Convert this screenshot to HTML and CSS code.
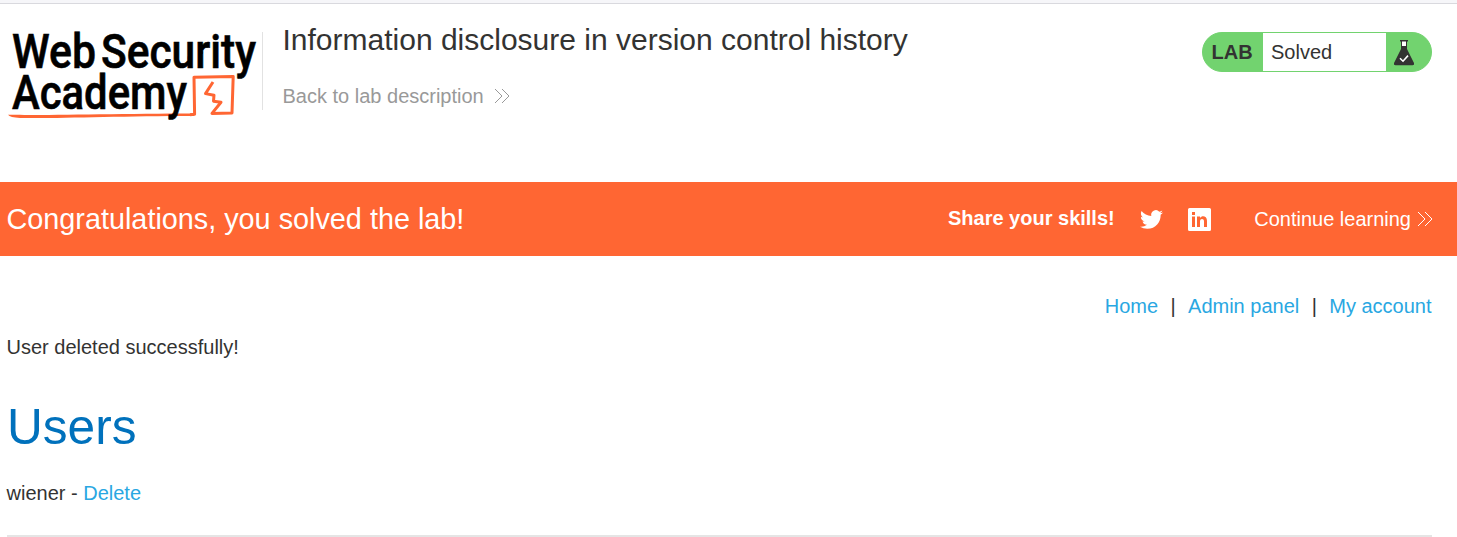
FILE: index.html
```html
<!DOCTYPE html>
<html lang="en">
<head>
<meta charset="utf-8">
<title>Information disclosure in version control history</title>
<link rel="stylesheet" href="styles.css">
</head>
<body>
<div class="top-edge"></div>
<header class="lab-header">
  <svg class="logo" width="262" height="104" viewBox="0 0 262 104" role="img" aria-label="Web Security Academy">
    <path class="logo-line" d="M8 94.8C40 95.4 120 93.6 194 93.4L194 96C120 96 60 98.6 20 98Q10 97.600 8 94.8Z"/>
    <path class="logo-frame" d="M190 94.7L194.600 94.3L194 57.2L233.2 56.6L232 93L212 93.4L221 82.2L213.5 81.2L214 75.2L205.5 73.6L213 62"/>
    <g class="logo-text">
      <text x="12" y="48" textLength="84" lengthAdjust="spacingAndGlyphs">Web</text>
      <text x="101" y="48" textLength="155" lengthAdjust="spacingAndGlyphs">Security</text>
      <text x="12" y="89" textLength="175" lengthAdjust="spacingAndGlyphs">Academy</text>
    </g>
  </svg>
  <div class="title-box">
    <h2>Information disclosure in version control history</h2>
    <a class="back" href="#">Back to lab description
      <svg width="16" height="16" viewBox="0 0 16 16"><path d="M1 1l7 7-7 7M8 1l7 7-7 7"/></svg>
    </a>
  </div>
  <div class="status">
    <span class="status-tag">LAB</span>
    <span class="status-text">Solved</span>
    <span class="status-icon">
      <svg width="20" height="26" viewBox="0 0 20 26">
        <path fill="#fff" d="M7 1h6v6H7z"/>
        <path fill="#333332" d="M6 0h8v1.4h-1V6h-1V1.4H8V6H7V1.4H6zM7 6h6v3l7 14q.5 2.200-1.500 2.200H1.500Q-.5 25.200 0 23L7 9z"/>
        <path d="M6 18.200l3 3 5-5.600" fill="none" stroke="#fff" stroke-width="1.600"/>
      </svg>
    </span>
  </div>
</header>
<section class="banner">
  <h4>Congratulations, you solved the lab!</h4>
  <span class="share">Share your skills!</span>
  <svg class="twitter" width="23" height="23" viewBox="0 0 24 24"><path d="M23.950 4.570a10 10 0 0 1-2.820.77 4.960 4.960 0 0 0 2.160-2.720c-.95.55-2 .95-3.130 1.180a4.920 4.920 0 0 0-8.380 4.480C7.690 8.100 4.070 6.130 1.640 3.160a4.820 4.820 0 0 0-.67 2.480c0 1.710.87 3.210 2.190 4.100a4.900 4.900 0 0 1-2.230-.62v.06a4.920 4.920 0 0 0 3.950 4.830 5 5 0 0 1-2.210.08 4.940 4.940 0 0 0 4.600 3.420A9.870 9.870 0 0 1 0 19.540a13.990 13.990 0 0 0 7.550 2.210c9.050 0 14-7.500 14-13.980 0-.21 0-.42-.02-.63a9.940 9.940 0 0 0 2.460-2.550z"/></svg>
  <svg class="linkedin" width="23" height="23" viewBox="0 0 23 23"><path fill-rule="evenodd" d="M1.500 0h20Q23 0 23 1.500v20Q23 23 21.500 23h-20Q0 23 0 21.500v-20Q0 0 1.500 0zM4 8.500v10.500H7V8.500zM4 4v3H7V4zM9 8.500v10.500h3v-5.500c0-3.200 4-3.200 4 0v5.500h3v-6.300c0-4.800-5-5.600-7-2.800V8.500z"/></svg>
  <a class="continue" href="#">Continue learning
    <svg width="16" height="16" viewBox="0 0 16 16"><path d="M1 1l7 7-7 7M8 1l7 7-7 7"/></svg>
  </a>
</section>
<main>
  <nav><a href="#">Home</a><span>|</span><a href="#">Admin panel</a><span>|</span><a href="#">My account</a></nav>
  <p class="message">User deleted successfully!</p>
  <h1>Users</h1>
  <div class="user">wiener - <a href="#">Delete</a></div>
  <hr>
</main>
</body>
</html>
```
FILE: styles.css
```css
* { box-sizing: border-box; }
body {
  margin: 0;
  height: 537px;
  overflow: hidden;
  background: #fff;
  color: #333332;
  font: 20px/24px "Liberation Sans", Arial, sans-serif;
}
h1, h2, h4, p { margin: 0; font-weight: 400; }
a { color: #29a7e2; text-decoration: none; }
.top-edge { height: 4px; background: #f6f6f9; border-bottom: 1px solid #d9d9de; }
.lab-header {
  display: flex;
  align-items: flex-start;
  height: 178px;
  padding: 16px 25px 0 0;
}
.logo { flex: none; overflow: visible; }
.logo-text {
  font-family: Roboto, sans-serif;
  font-size: 47.5px;
  font-weight: 500;
  fill: #000;
  stroke: #000;
  stroke-width: 0.6;
}
.logo-line { fill: #ff6633; }
.logo-frame { fill: none; stroke: #ff6633; stroke-width: 3; stroke-linejoin: round; }
.title-box {
  height: 78px;
  margin-top: 12px;
  padding-left: 19.500px;
  border-left: 1px solid #e2e2e2;
}
.title-box h2 { margin-top: -10px; font-size: 30px; line-height: 36px; white-space: nowrap; }
.back { display: flex; align-items: center; gap: 10px; margin-top: 26px; color: #999; }
.back svg, .continue svg { fill: none; stroke: currentColor; stroke-width: 1; }
.status {
  display: flex;
  width: 230px;
  height: 40px;
  margin: 12px 0 0 auto;
  border: 1px solid #72d36f;
  border-radius: 20px;
  overflow: hidden;
  background: #72d36f;
  line-height: 38px;
}
.status-tag { width: 60px; padding-left: 8.500px; font-weight: 700; }
.status-text { width: 123px; padding-left: 8px; background: #fff; }
.status-icon { padding: 7px 0 0 8px; line-height: 0; }
.banner {
  display: flex;
  align-items: center;
  height: 74px;
  padding: 0 24px 0 6.500px;
  background: #ff6633;
  color: #fff;
}
.banner h4 { margin-right: auto; font-size: 28.800px; line-height: 36px; }
.banner svg { fill: #fff; }
.share { margin-bottom: 2px; font-weight: 700; }
.banner .twitter { margin-left: 25.500px; }
.banner .linkedin { margin-left: 25px; }
.banner .continue { display: flex; align-items: center; gap: 6px; margin-left: 43px; color: #fff; }
.banner .continue svg { fill: none; }
main { padding: 38px 25px 0 7px; }
nav { display: flex; justify-content: flex-end; margin-right: 0.5px; }
nav span { width: 30px; text-align: center; }
.message { margin: 17px 0 0 -0.5px; }
h1 { margin-top: 38px; color: #0071bc; font-size: 49.600px; line-height: 60px; }
.user { margin: 24px 0 0 -0.5px; }
hr { height: 2px; margin: 30px 0 0; border: 0; background: #e5e5e5; }
```
